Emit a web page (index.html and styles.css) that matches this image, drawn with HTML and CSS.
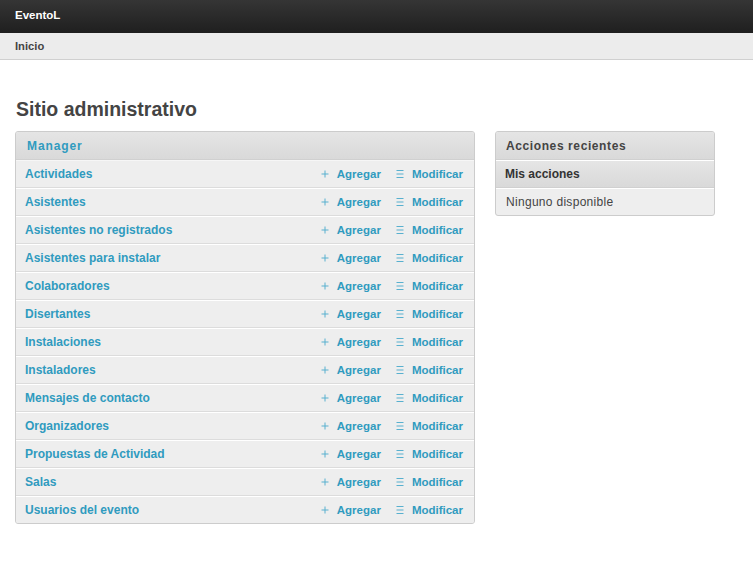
FILE: index.html
```html
<!DOCTYPE html>
<html lang="es">
<head>
<meta charset="utf-8">
<title>Sitio administrativo</title>
<link rel="stylesheet" href="styles.css">
</head>
<body>
<svg width="0" height="0" class="defs" aria-hidden="true">
  <symbol id="i-add" viewBox="0 0 8 8"><path d="M4 0.5V7.5M0.5 4H7.5" stroke="currentColor" stroke-width="1" fill="none"/></symbol>
  <symbol id="i-chg" viewBox="0 0 8 8"><path d="M0.5 0.5H7.5M0.5 4H7.5M0.5 7.5H7.5" stroke="currentColor" stroke-width="1" fill="none"/></symbol>
</svg>
<header class="topbar"><span class="brand">EventoL</span></header>
<nav class="crumbs"><span>Inicio</span></nav>
<main class="content">
  <h1 class="title">Sitio administrativo</h1>
  <div class="columns">
    <section class="module app">
      <h2 class="mod-head link">Manager</h2>
      <ul class="rows">
        <li class="row"><a class="name">Actividades</a><span class="acts"><a class="act"><svg class="ico"><use href="#i-add"/></svg>Agregar</a><a class="act"><svg class="ico"><use href="#i-chg"/></svg>Modificar</a></span></li>
        <li class="row"><a class="name">Asistentes</a><span class="acts"><a class="act"><svg class="ico"><use href="#i-add"/></svg>Agregar</a><a class="act"><svg class="ico"><use href="#i-chg"/></svg>Modificar</a></span></li>
        <li class="row"><a class="name">Asistentes no registrados</a><span class="acts"><a class="act"><svg class="ico"><use href="#i-add"/></svg>Agregar</a><a class="act"><svg class="ico"><use href="#i-chg"/></svg>Modificar</a></span></li>
        <li class="row"><a class="name">Asistentes para instalar</a><span class="acts"><a class="act"><svg class="ico"><use href="#i-add"/></svg>Agregar</a><a class="act"><svg class="ico"><use href="#i-chg"/></svg>Modificar</a></span></li>
        <li class="row"><a class="name">Colaboradores</a><span class="acts"><a class="act"><svg class="ico"><use href="#i-add"/></svg>Agregar</a><a class="act"><svg class="ico"><use href="#i-chg"/></svg>Modificar</a></span></li>
        <li class="row"><a class="name">Disertantes</a><span class="acts"><a class="act"><svg class="ico"><use href="#i-add"/></svg>Agregar</a><a class="act"><svg class="ico"><use href="#i-chg"/></svg>Modificar</a></span></li>
        <li class="row"><a class="name">Instalaciones</a><span class="acts"><a class="act"><svg class="ico"><use href="#i-add"/></svg>Agregar</a><a class="act"><svg class="ico"><use href="#i-chg"/></svg>Modificar</a></span></li>
        <li class="row"><a class="name">Instaladores</a><span class="acts"><a class="act"><svg class="ico"><use href="#i-add"/></svg>Agregar</a><a class="act"><svg class="ico"><use href="#i-chg"/></svg>Modificar</a></span></li>
        <li class="row"><a class="name">Mensajes de contacto</a><span class="acts"><a class="act"><svg class="ico"><use href="#i-add"/></svg>Agregar</a><a class="act"><svg class="ico"><use href="#i-chg"/></svg>Modificar</a></span></li>
        <li class="row"><a class="name">Organizadores</a><span class="acts"><a class="act"><svg class="ico"><use href="#i-add"/></svg>Agregar</a><a class="act"><svg class="ico"><use href="#i-chg"/></svg>Modificar</a></span></li>
        <li class="row"><a class="name">Propuestas de Actividad</a><span class="acts"><a class="act"><svg class="ico"><use href="#i-add"/></svg>Agregar</a><a class="act"><svg class="ico"><use href="#i-chg"/></svg>Modificar</a></span></li>
        <li class="row"><a class="name">Salas</a><span class="acts"><a class="act"><svg class="ico"><use href="#i-add"/></svg>Agregar</a><a class="act"><svg class="ico"><use href="#i-chg"/></svg>Modificar</a></span></li>
        <li class="row"><a class="name">Usuarios del evento</a><span class="acts"><a class="act"><svg class="ico"><use href="#i-add"/></svg>Agregar</a><a class="act"><svg class="ico"><use href="#i-chg"/></svg>Modificar</a></span></li>
      </ul>
    </section>
    <section class="module recent">
      <h2 class="mod-head">Acciones recientes</h2>
      <h3 class="sub-head">Mis acciones</h3>
      <p class="empty">Ninguno disponible</p>
    </section>
  </div>
</main>
</body>
</html>
```
FILE: styles.css
```css
* { box-sizing: border-box; }
html, body { margin: 0; padding: 0; background: #fff; }
body { font-family: "Liberation Sans", Arial, sans-serif; font-size: 12px; color: #444; }
.defs { position: absolute; width: 0; height: 0; overflow: hidden; }

.topbar {
  height: 33px;
  background: linear-gradient(#353535, #1f1f1f);
  display: flex;
  align-items: center;
  padding: 0 15px 3px;
}
.brand { color: #fff; font-weight: bold; font-size: 11.5px; }

.crumbs {
  height: 27px;
  background: #ececec;
  border-bottom: 1px solid #d0d0d0;
  display: flex;
  align-items: center;
  padding: 0 15px;
  font-weight: bold;
  font-size: 11.2px;
  color: #444;
}

.content { padding: 37px 15px 0; }
.title {
  margin: 0 0 10px 1px;
  font-size: 19.5px;
  line-height: 24px;
  color: #444;
  font-weight: bold;
}
.columns { display: flex; gap: 20px; align-items: flex-start; }

.module {
  border: 1px solid #ccc;
  border-radius: 3px;
  background: #eee;
  overflow: hidden;
}
.app { width: 460px; }
.recent { width: 220px; }

.mod-head {
  margin: 0;
  height: 28px;
  display: flex;
  align-items: center;
  padding: 1px 10px 0;
  font-size: 12px;
  font-weight: bold;
  background: linear-gradient(#e5e5e5, #d9d9d9);
  border-bottom: 1px solid #d0d0d0;
  color: #444;
  letter-spacing: 0.6px;
}
.mod-head.link { color: #309bbf; letter-spacing: 0.9px; padding-left: 11px; }

.rows { list-style: none; margin: 0; padding: 0; }
.row {
  height: 28px;
  display: flex;
  align-items: center;
  justify-content: space-between;
  padding: 0 11px 0 9px;
  border-top: 1px solid #fff;
  border-bottom: 1px solid #dcdcdc;
  background: #eee;
}
.row:first-child { border-top-color: #f6f6f6; }
.row:last-child { border-bottom: 0; height: 27px; }
.name, .act { color: #309bbf; font-weight: bold; text-decoration: none; }
.acts { display: flex; gap: 15px; font-size: 11.5px; }
.act { display: flex; align-items: center; }
.ico { width: 8px; height: 8px; margin-right: 8px; color: #58b0cf; }

.sub-head {
  margin: 0;
  height: 28px;
  display: flex;
  align-items: center;
  padding: 0 9px;
  font-size: 12px;
  font-weight: bold;
  color: #333;
  background: linear-gradient(#e5e5e5, #d9d9d9);
  border-top: 1px solid #fff;
  border-bottom: 1px solid #d0d0d0;
}
.empty {
  margin: 0;
  height: 27px;
  display: flex;
  align-items: center;
  padding: 0 10px;
  color: #444;
  letter-spacing: 0.3px;
  border-top: 1px solid #fff;
}
```
